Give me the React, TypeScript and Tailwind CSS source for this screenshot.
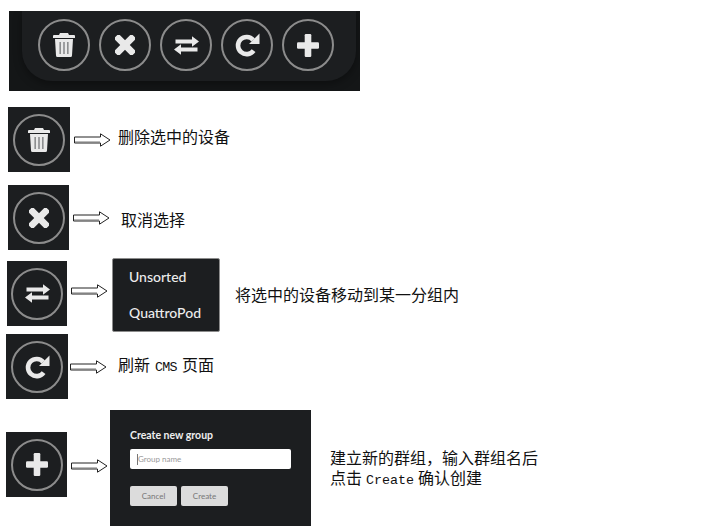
import type { ReactNode } from "react";

function Circle({ children }: { children: ReactNode }) {
  return (
    <div className="flex h-[52px] w-[52px] shrink-0 items-center justify-center rounded-full border-2 border-[#8c8c8c] text-[#e9e9e9]">
      {children}
    </div>
  );
}

function Trash() {
  return (
    <svg width="22" height="24" viewBox="0 0 22 24" fill="currentColor">
      <path d="M7 0 H15 L16 2 H21 Q22 2 22 3 V5 H0 V3 Q0 2 1 2 H6 Z" />
      <path d="M2 6 H20 L19 22.5 Q19 24 17.5 24 H4.5 Q3 24 3 22.5 Z" />
      <rect x="6.5" y="9" width="1.3" height="12" fill="#77797b" />
      <rect x="10.35" y="9" width="1.3" height="12" fill="#77797b" />
      <rect x="14.2" y="9" width="1.3" height="12" fill="#77797b" />
    </svg>
  );
}

function Cross() {
  return (
    <svg width="20" height="20" viewBox="0 0 20 20" fill="currentColor">
      <rect x="-2.5" y="6.6" width="25" height="6.8" rx="1.2" transform="rotate(45 10 10)" />
      <rect x="-2.5" y="6.6" width="25" height="6.8" rx="1.2" transform="rotate(-45 10 10)" />
    </svg>
  );
}

function Exchange() {
  return (
    <svg width="25" height="19" viewBox="0 0 25 19" fill="currentColor">
      <path d="M1.5 3.4 H18 V0.2 L25 5.5 L18 10.8 V7.6 H1.5 Z" />
      <path d="M23.5 11.4 H7 V8.2 L0 13.5 L7 18.8 V15.6 H23.5 Z" />
    </svg>
  );
}

function Redo() {
  return (
    <svg width="25" height="24" viewBox="0 0 25 24" fill="currentColor">
      <path d="M18.2 7 A8.6 8.6 0 1 0 18.6 17.6" fill="none" stroke="currentColor" strokeWidth="4.6" />
      <path d="M24.5 0.5 V11 H14 Z" />
    </svg>
  );
}

function Plus() {
  return (
    <svg width="22" height="23" viewBox="0 0 22 23" fill="currentColor">
      <rect x="7.7" y="0" width="6.6" height="23" rx="1.2" />
      <rect x="0" y="8.2" width="22" height="6.6" rx="1.2" />
    </svg>
  );
}

function Arrow() {
  return (
    <svg width="37" height="14" viewBox="0 0 37 14" className="shrink-0">
      <path d="M0.5 4 H26.5 V0.8 L36 7 L26.5 13.2 V10 H0.5 Z" fill="#fff" stroke="#222" strokeWidth="1" />
      <path d="M1 9 H26" stroke="#777" strokeWidth="1" />
    </svg>
  );
}

const cjk = "font-['Noto_Sans_CJK_SC',sans-serif] text-[16px] leading-[20px] text-[#111]";
const mono = "font-['Liberation_Mono',monospace]";

export default function App() {
  return (
    <div className="flex h-[532px] w-[704px] flex-col overflow-hidden bg-white font-['Lato',sans-serif]">
      <div className="ml-[9px] mt-[11px] h-[80px] w-[351px] overflow-hidden bg-[#141617]">
        <div className="ml-[13px] flex h-[70px] w-[334px] gap-[9px] rounded-b-[30px] bg-[#1c1e20] pl-[16px] pt-[8px] shadow-[0_3px_8px_rgba(0,0,0,0.35)]">
          <Circle><Trash /></Circle>
          <Circle><Cross /></Circle>
          <Circle><Exchange /></Circle>
          <Circle><Redo /></Circle>
          <Circle><Plus /></Circle>
        </div>
      </div>

      <div className="ml-[8px] mt-[16px] flex h-[65px] items-center">
        <div className="flex h-[65px] w-[62px] items-center justify-center bg-[#1c1e20]">
          <Circle><Trash /></Circle>
        </div>
        <div className="ml-[4px]"><Arrow /></div>
        <span className={`ml-[7px] -mt-[8px] ${cjk}`}>删除选中的设备</span>
      </div>

      <div className="ml-[8px] mt-[13px] flex h-[65px] items-center">
        <div className="flex h-[65px] w-[61px] items-center justify-center bg-[#1c1e20]">
          <Circle><Cross /></Circle>
        </div>
        <div className="ml-[4px]"><Arrow /></div>
        <span className={`ml-[11px] mt-[2px] ${cjk}`}>取消选择</span>
      </div>

      <div className="ml-[7px] mt-[8px] flex h-[74px] items-start">
        <div className="mt-[3px] flex h-[65px] w-[60px] items-center justify-center bg-[#1c1e20]">
          <Circle><Exchange /></Circle>
        </div>
        <div className="ml-[4px] mt-[26px]"><Arrow /></div>
        <div className="ml-[4px] flex h-[74px] w-[108px] flex-col justify-between rounded-[2px] border border-[#8c8c8c] bg-[#1c1e20] pb-[9px] pl-[16px] pt-[9px] text-[14px] font-medium leading-[18px] text-[#ececec]">
          <span>Unsorted</span>
          <span>QuattroPod</span>
        </div>
        <span className={`ml-[15px] mt-[26px] ${cjk}`}>将选中的设备移动到某一分组内</span>
      </div>

      <div className="ml-[6px] mt-[2px] flex h-[65px] items-center">
        <div className="flex h-[65px] w-[62px] items-center justify-center bg-[#1c1e20]">
          <Circle><Redo /></Circle>
        </div>
        <div className="ml-[2px]"><Arrow /></div>
        <span className={`ml-[11px] -mt-[2px] flex items-baseline gap-[5px] ${cjk}`}>
          <span>刷新</span>
          <span className={`${mono} text-[13.33px] tracking-[-0.7px]`}>CMS</span>
          <span>页面</span>
        </span>
      </div>

      <div className="ml-[6px] mt-[11px] flex h-[116px] items-start">
        <div className="mt-[22px] flex h-[65px] w-[61px] items-center justify-center bg-[#1c1e20]">
          <Circle><Plus /></Circle>
        </div>
        <div className="ml-[4px] mt-[49px]"><Arrow /></div>
        <div className="ml-[2px] flex h-[116px] w-[201px] flex-col bg-[#1c1e20] pl-[20px] pt-[18px]">
          <div className="text-[10.5px] font-bold leading-[14px] text-[#eeeeee]">Create new group</div>
          <div className="mt-[7px] flex h-[20px] w-[161px] items-center rounded-[2px] bg-white pl-[7px] text-[8px] text-[#999999]">
            <span className="h-[11px] w-px bg-[#777777]" />
            Group name
          </div>
          <div className="mt-[17px] flex gap-[4px]">
            <div className="flex h-[20px] w-[47px] items-center justify-center rounded-[2px] bg-[#dcdcdc] text-[8px] text-[#777777]">Cancel</div>
            <div className="flex h-[20px] w-[47px] items-center justify-center rounded-[2px] bg-[#dcdcdc] text-[8px] text-[#777777]">Create</div>
          </div>
        </div>
        <div className={`ml-[19px] mt-[37px] whitespace-pre ${cjk}`}>
          <div>建立新的群组，输入群组名后</div>
          <div className="flex items-baseline gap-[4px]">
            <span>点击</span>
            <span className={`${mono} text-[13.33px]`}>Create</span>
            <span>确认创建</span>
          </div>
        </div>
      </div>
    </div>
  );
}
